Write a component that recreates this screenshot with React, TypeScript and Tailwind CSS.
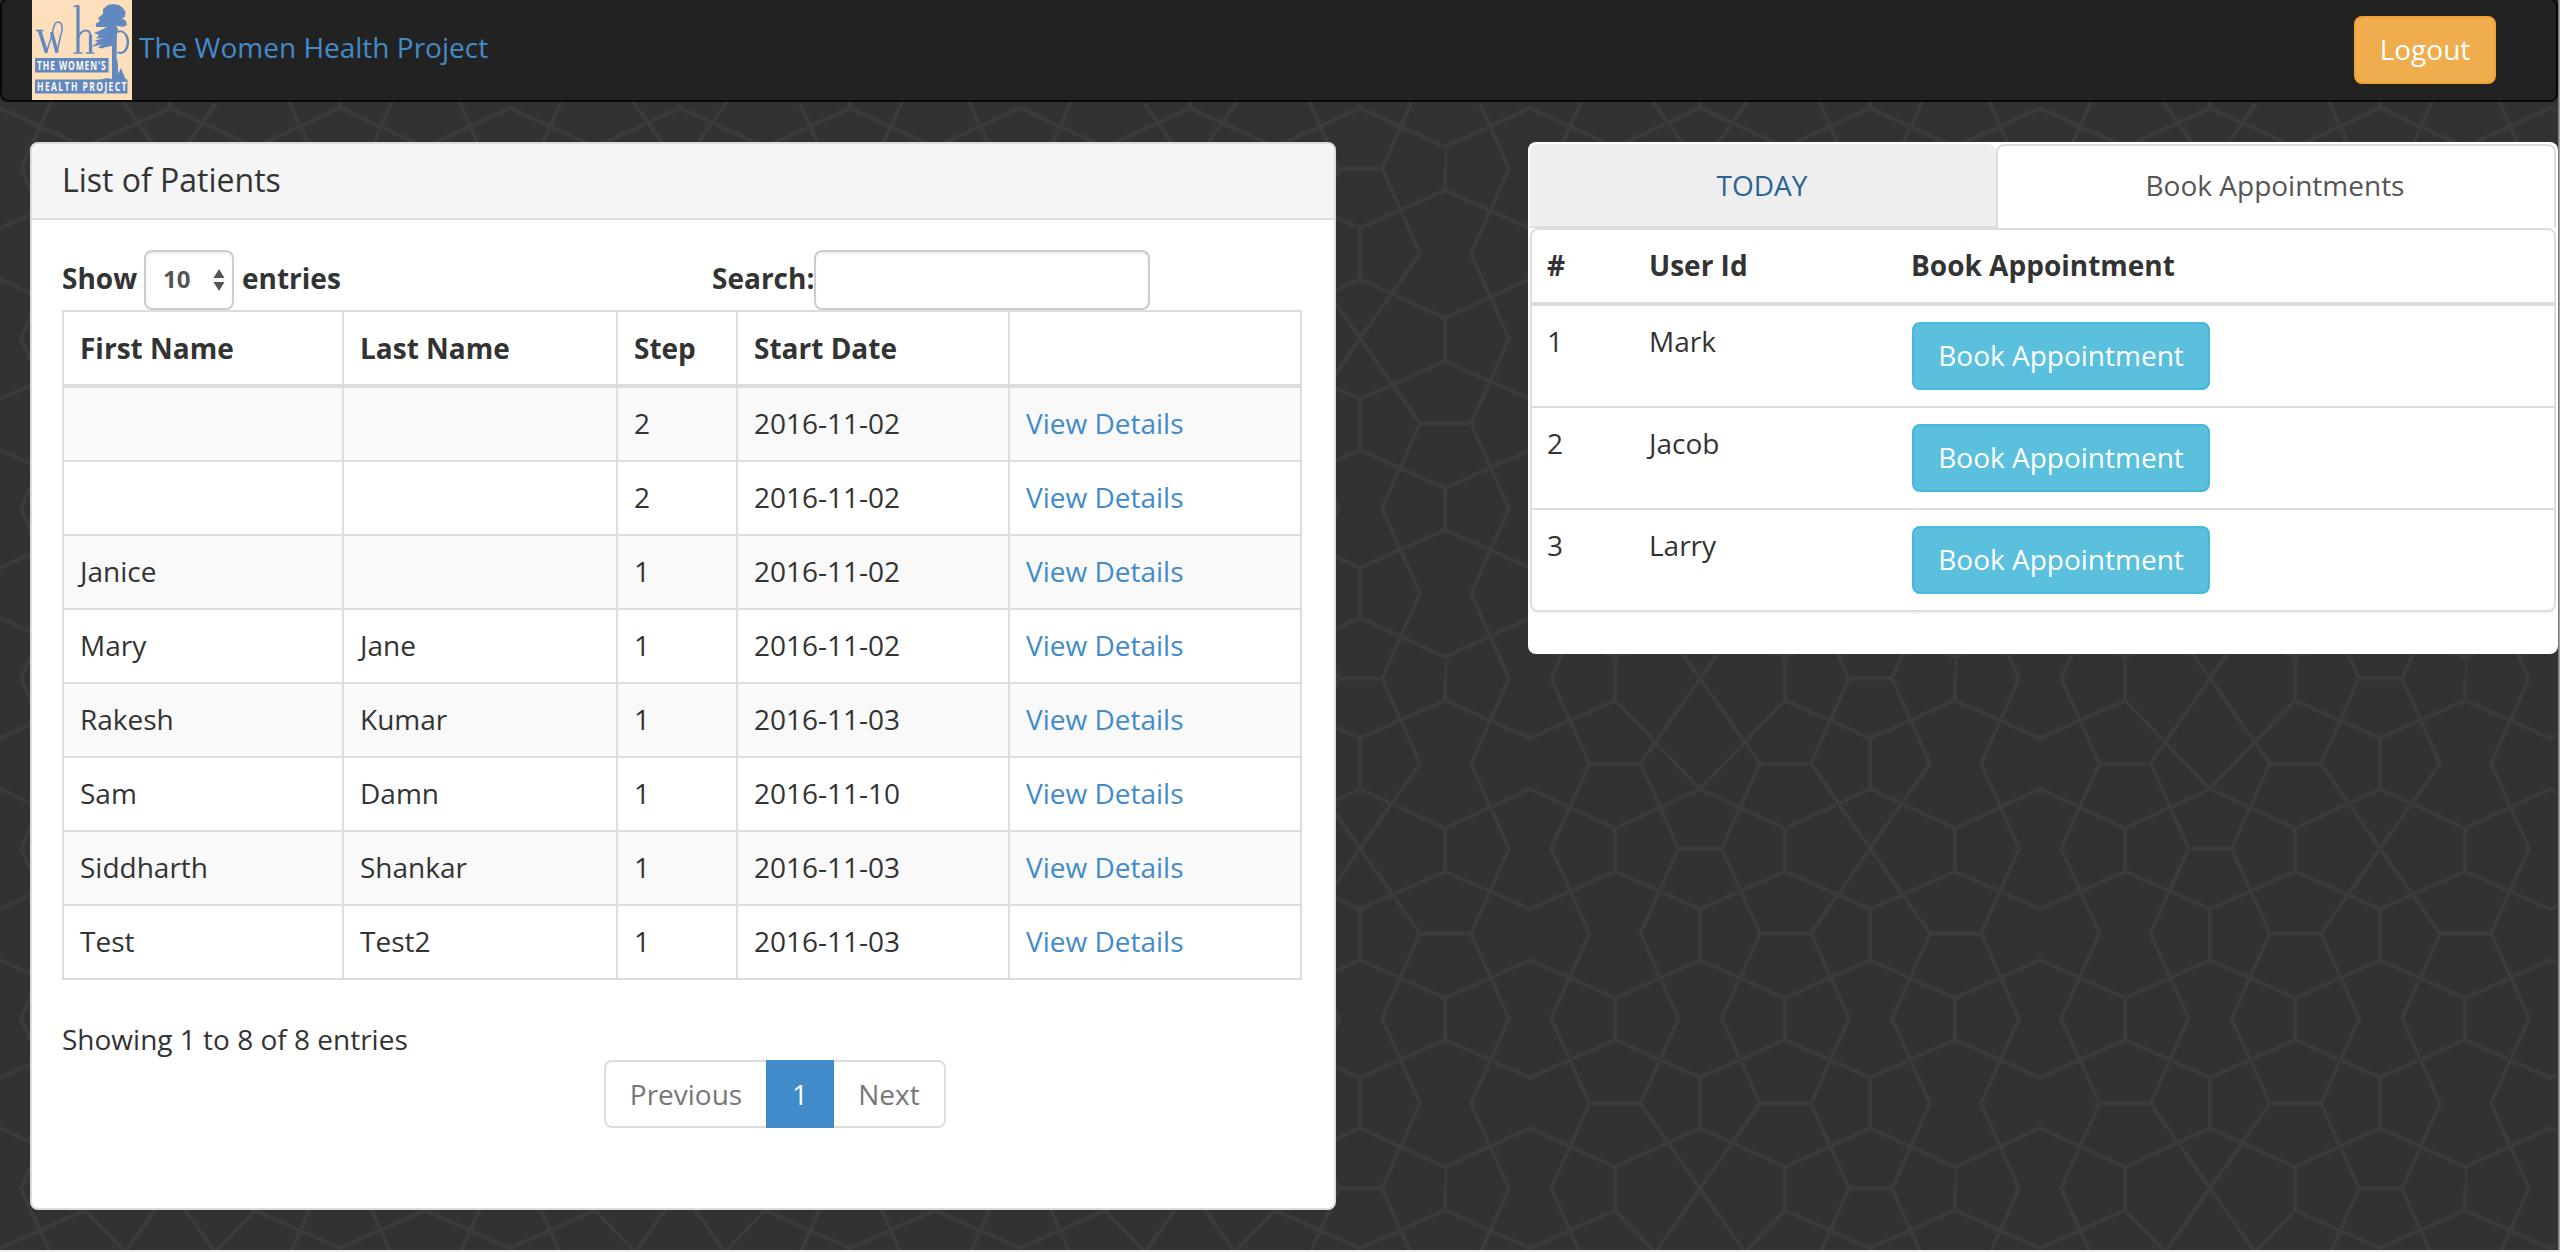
import React from "react";

type Patient = { first: string; last: string; step: string; date: string };

const patients: Patient[] = [
  { first: "", last: "", step: "2", date: "2016-11-02" },
  { first: "", last: "", step: "2", date: "2016-11-02" },
  { first: "Janice", last: "", step: "1", date: "2016-11-02" },
  { first: "Mary", last: "Jane", step: "1", date: "2016-11-02" },
  { first: "Rakesh", last: "Kumar", step: "1", date: "2016-11-03" },
  { first: "Sam", last: "Damn", step: "1", date: "2016-11-10" },
  { first: "Siddharth", last: "Shankar", step: "1", date: "2016-11-03" },
  { first: "Test", last: "Test2", step: "1", date: "2016-11-03" },
];

const bookings = [
  { id: "1", user: "Mark" },
  { id: "2", user: "Jacob" },
  { id: "3", user: "Larry" },
];

// One 510px tile of the outline pattern; edges run past the tile so that copies join up.
const TILE_PATH = [
  "M0 -21.4V21.8M0 149.8V192.8M0 319.6V361.3",
  "M170 -21.4V21.8M170 149.8V192.8M170 319.6V361.3",
  "M340 -21.4V21.8M340 149.8V192.8M340 319.6V361.3",
  "M255 230.6V281.7M255 399.2V449.5",
  "M425 59.7V110.4M425 230.6V281.7M425 399.2V449.5",
  "M0 21.8L85 59.7L170 21.8L255 110.4L340 21.8L425 59.7L510 21.8",
  "M0 149.8L85 110.4L170 149.8L255 110.4L340 149.8L425 110.4L510 149.8",
  "M0 192.8L85 230.6L170 192.8L255 230.6L340 192.8L425 230.6L510 192.8",
  "M0 319.6L85 281.7L170 319.6L255 281.7L340 319.6L425 281.7L510 319.6",
  "M0 361.3L85 399.2L170 361.3L255 399.2L340 361.3L425 399.2L510 361.3",
  "M0 488.6L85 449.5L170 488.6L255 449.5L340 488.6L425 449.5L510 488.6",
  "M64 0L26 85L64 170L26 255L64 340L26 425L64 510",
  "M106 0L144.5 85L106 170L144.5 255L106 340L144.5 425L106 510",
  "M255 0L195.5 85L233.5 170L195.5 255L233.5 340L195.5 425L255 510",
  "M255 0L315 85L276.5 170L315 255L276.5 340L315 425L255 510",
  "M404 0L366 85L425 170L366 255L404 340L366 425L404 510",
  "M447 0L485 85L425 170L485 255L447 340L485 425L447 510",
  "M144.5 85H195.5M315 85H366M233.5 170H276.5M315 255H366M485 255H536M-25 255H26",
  "M144.5 425H195.5M315 425H366M404 0H447M404 510H447",
].join("");

function Backdrop() {
  return (
    <svg className="absolute inset-0 h-full w-full" aria-hidden="true">
      <defs>
        <pattern id="tile" x="425" y="168.5" width="510" height="510" patternUnits="userSpaceOnUse">
          <g fill="none" stroke="#3b3b3b" strokeWidth="3.6">
            <path d={TILE_PATH} />
            <path d={TILE_PATH} transform="translate(0 510)" />
            <path d={TILE_PATH} transform="translate(510 0)" />
            <path d={TILE_PATH} transform="translate(-510 0)" />
            <path d={TILE_PATH} transform="translate(0 -510)" />
          </g>
        </pattern>
      </defs>
      <rect width="100%" height="100%" fill="url(#tile)" />
    </svg>
  );
}

function Logo() {
  return (
    <svg viewBox="0 0 100 100" className="h-[100px] w-[100px] shrink-0">
      <rect width="100" height="100" fill="#fddfbb" />
      <g fill="none" stroke="#6289bf" strokeLinecap="round" strokeLinejoin="round">
        <path d="M4.500 30.500H11" strokeWidth="1.400" />
        <path d="M7.500 30.500L14.500 52.500" strokeWidth="3.600" strokeLinecap="butt" />
        <path d="M14.500 52.500L20.500 33C21.500 25 23.500 21.500 26.500 22C31 23 31 30 28.500 36L25 52.500" strokeWidth="1.500" />
        <path d="M19.500 32L25 52.500" strokeWidth="3.400" strokeLinecap="butt" />
        <path d="M42 6.500L46 5.500" strokeWidth="1.400" />
        <path d="M46 5.500V53" strokeWidth="3.200" strokeLinecap="butt" />
        <path d="M42 53H50M54.500 53H62" strokeWidth="1.400" />
        <path d="M47 36C50 29 58.500 28 58.500 37" strokeWidth="1.900" />
        <path d="M58.500 35V53" strokeWidth="3.200" strokeLinecap="butt" />
        <path d="M85 32C92 29 96 36 96 42C96 50 91 54.500 86 52.500" strokeWidth="1.800" />
        <path d="M94 35C96.500 40 96.500 45 93.500 50" strokeWidth="2.200" />
      </g>
      <g fill="#6289bf">
        <path d="M81 4L87 5L91 8L93.500 12L93 17L90 18L94 21L95 25L91 27L84 25.500L86 29L85 33L84.500 58L86 64L86 74L89 68L91 73L93 78L95 80H67L75 78L80 79L80 46L74 47L70 48.500L66 47.500L70 44.500L59 47L66 42L62 41L70 38.500L76 38L64 38.500L67 35L62 33L69 30L75 27L64 27L64 23.500L68 21L66 18L71 14L71 9L76 5Z" />
        <rect x="3" y="58" width="73.500" height="14.500" />
        <rect x="3" y="79.500" width="92.500" height="14" />
      </g>
      <g fill="#fff8ee" fontFamily="'Open Sans', sans-serif" fontWeight="700" fontSize="11.500">
        <text transform="translate(5 69.500) scale(0.740 1)" textLength="93" lengthAdjust="spacing">THE WOMEN'S</text>
        <text transform="translate(5 90.800) scale(0.740 1)" textLength="121" lengthAdjust="spacing">HEALTH PROJECT</text>
      </g>
    </svg>
  );
}

function Navbar() {
  return (
    <nav className="relative -mt-[2px] flex h-[104px] w-[2558px] items-start justify-between rounded-[8px] border-2 border-[#080808] bg-[#222] pl-[30px] pr-[60px]">
      <a className="flex items-start text-[#428bca]">
        <Logo />
        <span className="mt-[27px] ml-[7px]">The Women Health Project</span>
      </a>
      <button className="mt-[16px] h-[68px] w-[142px] rounded-[8px] border-2 border-[#eea236] bg-[#f0ad4e] pb-[2px] text-white">
        Logout
      </button>
    </nav>
  );
}

function PatientsPanel() {
  return (
    <section className="h-[1068px] w-[1306px] rounded-[8px] border-2 border-[#ddd] bg-white">
      <h3 className="h-[76px] rounded-t-[6px] border-b-2 border-[#ddd] bg-[#f5f5f5] px-[30px] pt-[16px] text-[32px] leading-[40px]">
        List of Patients
      </h3>
      <div className="px-[30px] pt-[30px]">
        <div className="flex h-[60px] font-bold">
          <label className="flex w-[650px] items-center">
            <span className="mt-[-5px] w-[82px]">Show</span>
            <span className="flex h-[60px] w-[90px] items-center justify-between rounded-[8px] border-2 border-[#ccc] pr-[7px] pl-[17px] text-[24px] text-[#555] shadow-[inset_0_2px_2px_rgba(0,0,0,0.075)]">
              <span className="-mt-[3px]">10</span>
              <svg viewBox="0 0 12 24" className="h-[24px] w-[12px]" fill="#555">
                <path d="M6 1L11.500 10H0.500ZM6 23L11.500 14H0.500Z" />
              </svg>
            </span>
            <span className="mt-[-5px] ml-[8px]">entries</span>
          </label>
          <label className="flex items-center">
            <span className="mt-[-5px] w-[102px]">Search:</span>
            <input className="h-[60px] w-[336px] rounded-[8px] border-2 border-[#ccc] bg-white shadow-[inset_0_2px_2px_rgba(0,0,0,0.075)]" />
          </label>
        </div>
        <table className="w-[1240px] table-fixed border-separate border-spacing-0 border-t-2 border-r-2 border-[#ddd] text-left">
          <colgroup>
            <col className="w-[280px]" />
            <col className="w-[274px]" />
            <col className="w-[120px]" />
            <col className="w-[272px]" />
            <col />
          </colgroup>
          <thead>
            <tr>
              {["First Name", "Last Name", "Step", "Start Date", ""].map((h, i) => (
                <th key={i} className="h-[76px] border-b-4 border-l-2 border-[#ddd] px-[16px] py-0 font-bold">
                  {h}
                </th>
              ))}
            </tr>
          </thead>
          <tbody>
            {patients.map((p, i) => (
              <tr key={i} className="odd:bg-[#f9f9f9]">
                {[p.first, p.last, p.step, p.date].map((v, j) => (
                  <td key={j} className="h-[74px] border-b-2 border-l-2 border-[#ddd] px-[16px] pt-0 pb-[2px]">
                    {v}
                  </td>
                ))}
                <td className="h-[74px] border-b-2 border-l-2 border-[#ddd] px-[16px] pt-0 pb-[2px] text-[#428bca]">
                  View Details
                </td>
              </tr>
            ))}
          </tbody>
        </table>
        <p className="mt-[39px]">Showing 1 to 8 of 8 entries</p>
        <div className="mt-px ml-[542px] flex h-[68px] w-[342px] text-center leading-[64px] text-[#777]">
          <span className="w-[162px] rounded-l-[8px] border-2 border-r-0 border-[#ddd]">Previous</span>
          <span className="w-[68px] border-2 border-[#428bca] bg-[#428bca] text-white">1</span>
          <span className="w-[112px] rounded-r-[8px] border-2 border-l-0 border-[#ddd]">Next</span>
        </div>
      </div>
    </section>
  );
}

function AppointmentsPanel() {
  return (
    <section className="h-[512px] w-[1030px] rounded-[8px] bg-white p-[2px]">
      <div className="flex h-[84px] w-[1026px] text-center">
        <a className="w-[466px] rounded-t-[8px] border-b-2 border-[#ddd] bg-[#eee] pt-[21px] pr-[2px] text-[#2a6496]">TODAY</a>
        <a className="w-[560px] rounded-t-[8px] border-2 border-b-0 border-[#ddd] pt-[19px] pr-[2px] text-[#555]">
          Book Appointments
        </a>
      </div>
      <div className="w-[1026px] rounded-[8px] border-2 border-[#ddd] shadow-[0_2px_2px_rgba(0,0,0,0.05)]">
        <div className="flex h-[76px] border-b-4 border-[#ddd] pt-[15px] pl-[15px] font-bold">
          <span className="w-[102px]">#</span>
          <span className="w-[262px]">User Id</span>
          <span>Book Appointment</span>
        </div>
        {bookings.map((b) => (
          <div key={b.id} className="flex items-start h-[102px] border-b-2 border-[#ddd] pt-[16px] pl-[15px] last:h-[100px] last:border-b-0">
            <span className="-mt-px w-[102px]">{b.id}</span>
            <span className="-mt-px w-[263px]">{b.user}</span>
            <button className="h-[68px] w-[298px] rounded-[8px] border-2 border-[#46b8da] bg-[#5bc0de] pb-[2px] text-white">
              Book Appointment
            </button>
          </div>
        ))}
      </div>
    </section>
  );
}

export default function App() {
  return (
    <div className="relative h-[1252px] w-[2560px] overflow-hidden border-b-2 border-[#f0f0f0] bg-[#323232] font-['Open_Sans',sans-serif] text-[28px] leading-[40px] text-[#333]">
      <Backdrop />
      <div className="relative flow-root">
        <Navbar />
        <main className="mt-[40px] flex items-start gap-[192px] pl-[30px]">
          <PatientsPanel />
          <AppointmentsPanel />
        </main>
      </div>
      {/* Edge of the window's scroll bar */}
      <div className="absolute inset-y-0 right-0 w-[2px] border-l border-[#7a7a7a] bg-[#a3a3a3]" />
    </div>
  );
}
